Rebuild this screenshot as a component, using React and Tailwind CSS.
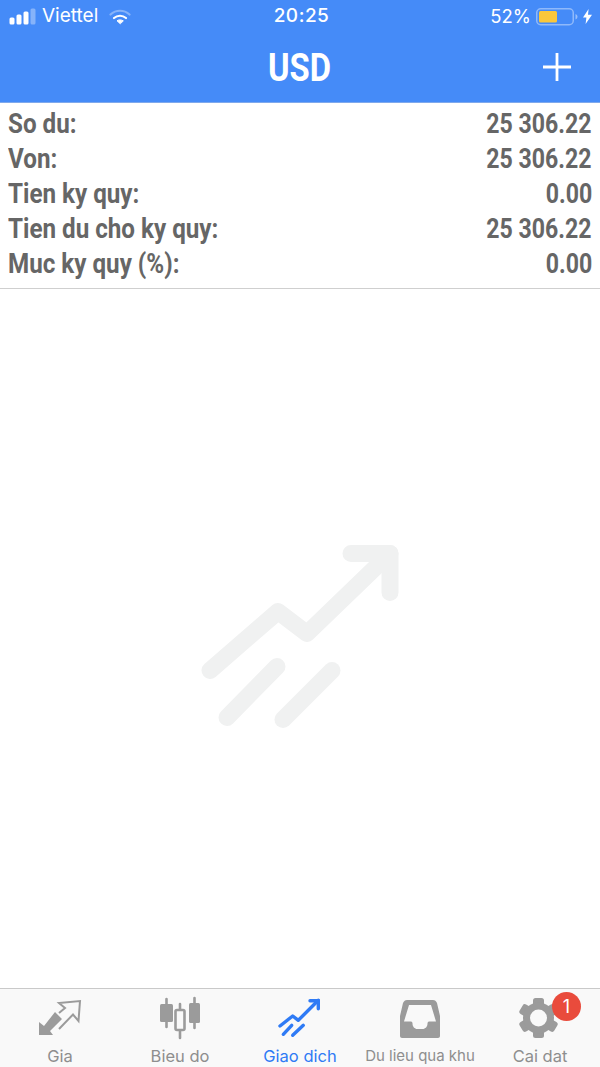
const ROWS = [
  ['So du:', '25 306.22'],
  ['Von:', '25 306.22'],
  ['Tien ky quy:', '0.00'],
  ['Tien du cho ky quy:', '25 306.22'],
  ['Muc ky quy (%):', '0.00'],
];

function StatusBar() {
  return (
    <div className="relative flex h-[33px] items-center justify-between pl-[9px] pr-[8px] text-white font-['Inter',sans-serif]">
      <div className="flex items-center">
        <svg width="27" height="17" viewBox="0 0 27 17">
          <rect x="0.5" y="9.5" width="5" height="7" rx="1.5" fill="#fff" />
          <rect x="7.5" y="6.5" width="5" height="10" rx="1.5" fill="#fff" />
          <rect x="14.5" y="3.5" width="5" height="13" rx="1.5" fill="#fff" />
          <rect x="21.5" y="0.5" width="5" height="16" rx="1.5" fill="#fff" fillOpacity="0.35" />
        </svg>
        <span className="ml-[6px] text-[19px] font-normal">Viettel</span>
        <svg className="ml-[11px]" width="22" height="16" viewBox="0 0 22 16" fill="none" stroke="#fff" strokeLinecap="round">
          <path d="M1.5 5.5C7 0.5 15 0.5 20.5 5.5" strokeWidth="2.2" strokeOpacity="0.35" />
          <path d="M5 9C8.5 6 13.5 6 17 9" strokeWidth="2.2" />
          <path d="M11 14.5L8 11.7C9.8 10.6 12.2 10.6 14 11.7Z" fill="#fff" strokeWidth="1" />
        </svg>
      </div>
      <span className="absolute left-[3px] right-0 text-center text-[19px] font-medium tracking-[0.5px]">20:25</span>
      <div className="flex items-center">
        <span className="text-[18.5px]">52%</span>
        <svg className="ml-[5px]" width="42" height="18" viewBox="0 0 42 18">
          <rect x="0.75" y="0.75" width="36.5" height="16" rx="4" fill="none" stroke="#fff" strokeOpacity="0.4" strokeWidth="1.5" />
          <rect x="3" y="3" width="18" height="11.5" rx="1.5" fill="#f9c73c" />
          <path d="M39.5 6v5.5c1.2-.4 2-1.5 2-2.7s-.8-2.4-2-2.8z" fill="#fff" fillOpacity="0.45" />
        </svg>
        <svg className="ml-[5px]" width="9" height="15" viewBox="0 0 9 15">
          <path d="M5.6 0L0 8.5h3.4L2.6 15 9 5.8H5z" fill="#fff" />
        </svg>
      </div>
    </div>
  );
}

function Header() {
  return (
    <header className="bg-[#458bf8] h-[103px] border-b border-[#7fa9ec]">
      <StatusBar />
      <div className="relative flex h-[69px] items-center justify-center pt-[2px]">
        <h1 className="scale-x-[0.84] text-[39px] font-bold text-white leading-none font-['Roboto',sans-serif]">USD</h1>
        <svg className="absolute right-[28px] top-[19px]" width="30" height="30" viewBox="0 0 30 30">
          <path d="M15 1v28M1 15h28" stroke="#fff" strokeWidth="2.8" />
        </svg>
      </div>
    </header>
  );
}

function Summary() {
  return (
    <div className="border-b border-[#cfcfcf] px-[8px] pt-[3px] pb-[7px] font-['Roboto',sans-serif] text-[28px] font-bold text-[#666666]">
      {ROWS.map(([label, value]) => (
        <div key={label} className="flex h-[35px] items-center justify-between leading-none">
          <span className="origin-left scale-x-[0.864]">{label}</span>
          <span className="origin-right scale-x-[0.825]">{value}</span>
        </div>
      ))}
    </div>
  );
}

function EmptyIcon() {
  return (
    <svg width="200" height="186" viewBox="0 0 200 186" fill="none" stroke="#f0f1f1" strokeWidth="17" strokeLinecap="round" strokeLinejoin="round">
      <path d="M10 128.5 78 69.5l29 22L190 11.5" />
      <path d="M151 11.5h39v39" />
      <path d="M77 124.5l-50 51" />
      <path d="M132 128.5l-49 49" />
    </svg>
  );
}

function GiaIcon() {
  return (
    <svg width="60" height="44" viewBox="0 0 60 44" fill="#9b9b9b">
      <path d="M9 39V26l5 4 11-14 7 7-12 12 3 4z" />
      <path d="M29 17l6-5-6-5 21-2-1.5 20-5.500-6.500L29 33" fill="none" stroke="#9b9b9b" strokeWidth="2" />
    </svg>
  );
}

function ChartIcon() {
  return (
    <svg width="60" height="44" viewBox="0 0 60 44" fill="#9b9b9b" stroke="#9b9b9b">
      <path d="M16.500 3v28M44.500 2v30M30 8v34" strokeWidth="2.600" strokeLinecap="round" fill="none" />
      <rect x="10" y="8" width="13" height="18" rx="1.500" stroke="none" />
      <rect x="39" y="7" width="11" height="20" rx="1.500" stroke="none" />
      <rect x="25.500" y="14" width="9" height="20" rx="1.500" fill="#f9f9f9" strokeWidth="2.600" />
    </svg>
  );
}

function TradeIcon() {
  return (
    <svg width="60" height="44" viewBox="0 0 60 44" fill="none" stroke="#2f7bf5" strokeWidth="3.400" strokeLinecap="round" strokeLinejoin="round">
      <path d="M10 30 22.700 20l5.600 4.300L48.300 4.300" />
      <path d="M40 4.800h8.300v8" />
      <path d="M21.700 29.300 13.300 38.300" />
      <path d="M33.300 29.300 22.700 39.300" />
    </svg>
  );
}

function InboxIcon() {
  return (
    <svg width="40" height="40" viewBox="0 -2 40 40">
      <path
        fillRule="evenodd"
        fill="#9b9b9b"
        d="M7 0h26c2 0 3 1 4 3l3 13v20c0 1-1 2-2 2H2c-1 0-2-1-2-2V16L3 3c1-2 2-3 4-3zM9 5 4 21.500h7c1 0 1.500 1 1.500 2 0 3 2 5.500 5 5.500h5c3 0 5-2.500 5-5.500 0-1 .5-2 1.500-2h7L31 5z"
      />
    </svg>
  );
}

function GearIcon() {
  return (
    <svg className="overflow-visible" width="40" height="44" viewBox="0 0 40 44">
      {[0, 60, 120].map(a => (
        <rect key={a} x="13" y="2" width="11" height="40" rx="2.500" fill="#9b9b9b" transform={`rotate(${a} 18.500 22)`} />
      ))}
      <circle cx="18.500" cy="22" r="15.500" fill="#9b9b9b" />
      <circle cx="18.500" cy="22" r="8.500" fill="#f9f9f9" />
    </svg>
  );
}

const TABS = [
  { label: 'Gia', icon: <GiaIcon />, size: 'text-[16.500px]' },
  { label: 'Bieu do', icon: <ChartIcon />, size: 'text-[16.500px]' },
  { label: 'Giao dich', icon: <TradeIcon />, size: 'text-[16.500px]', active: true },
  { label: 'Du lieu qua khu', icon: <InboxIcon />, size: 'text-[15px]' },
  { label: 'Cai dat', icon: <GearIcon />, size: 'text-[16.500px]', badge: 1 },
];

function TabBar() {
  return (
    <nav className="grid h-[79px] grid-cols-5 border-t border-[#c9c9c9] bg-[#f9f9f9] font-['Inter',sans-serif]">
      {TABS.map(tab => (
        <div key={tab.label} className="flex flex-col items-center pt-[7px]">
          <div className="relative flex h-[44px] items-center justify-center">
            {tab.icon}
            {tab.badge && (
              <span className="absolute -right-[21px] -top-[4px] flex h-[29px] w-[29px] items-center justify-center rounded-full bg-[#e94b3c] text-[18px] text-white">
                {tab.badge}
              </span>
            )}
          </div>
          <span className={`mt-[7px] whitespace-nowrap leading-[18px] ${tab.size} ${tab.active ? 'text-[#2f7bf5]' : 'text-[#8e8e8e]'}`}>
            {tab.label}
          </span>
        </div>
      ))}
    </nav>
  );
}

export default function App() {
  return (
    <div className="flex h-[1067px] w-[600px] flex-col overflow-hidden bg-white">
      <Header />
      <Summary />
      <main className="flex flex-1 items-start justify-center pt-[253px]">
        <EmptyIcon />
      </main>
      <TabBar />
    </div>
  );
}
